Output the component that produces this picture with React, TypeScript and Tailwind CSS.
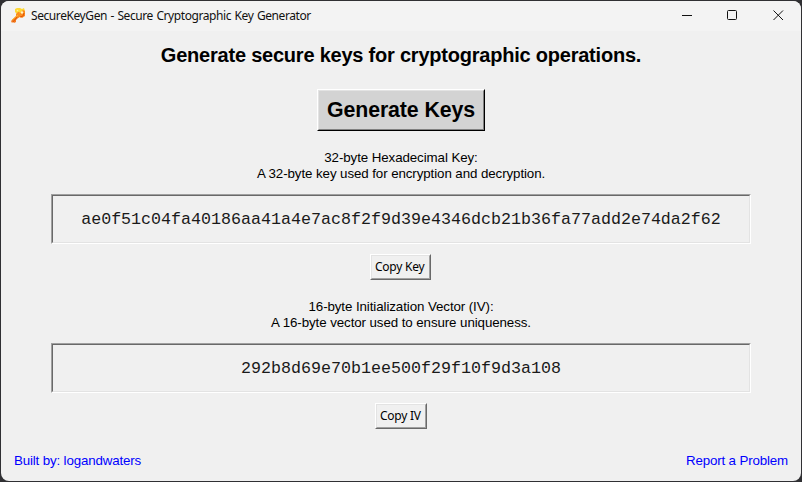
import type { ReactNode } from "react";

function KeyIcon() {
  return (
    <svg width="16" height="16" viewBox="0 0 16 16" className="shrink-0">
      <path d="M5 1l2-1h3l2 1 2-1 1 3-3 3H7L5 4z" fill="#fdd835" />
      <path d="M7 7l2 2-3 3v2l-2 1-1-1-1 1-1-2z" fill="#f47c20" />
      <path d="M6 6l2-2 3 0 2-2 2 1v5l-3 2-2-1-2 1-2-2z" fill="#fb8c1e" />
      <path d="M2 12l6-5M9 5l3-1" stroke="#ffb52e" strokeWidth="1" fill="none" />
      <path d="M3 14l4-5M10 9l3-1 1-3" stroke="#e25608" strokeWidth="1" fill="none" />
      <circle cx="12" cy="4.5" r="1.2" fill="#fff3c4" />
      <circle cx="7.5" cy="2.5" r="0.8" fill="#fff59a" />
    </svg>
  );
}

function TitleBar() {
  return (
    <div className="flex h-[30px] shrink-0 items-center bg-[#f3f3f3] pl-[9px]">
      <KeyIcon />
      <span className="ml-[5px] whitespace-nowrap font-['Noto_Sans',sans-serif] text-[12px] leading-[16px] tracking-[-0.42px] [word-spacing:0.8px] text-[#111]">
        SecureKeyGen - Secure Cryptographic Key Generator
      </span>
      <svg className="mr-[16px] mb-[2px] ml-auto" width="104" height="12" viewBox="0 0 104 12" fill="none" stroke="#111">
        <path d="M1 6.5h10" />
        <rect x="46.5" y="1.5" width="9" height="9" rx="1" />
        <path d="M92.5 1.5l9.5 9.5M102 1.5l-9.5 9.5" />
      </svg>
    </div>
  );
}

function Description({ children }: { children: ReactNode }) {
  return (
    <div className="h-8 whitespace-nowrap text-center text-[13.33px] leading-4 tracking-[-0.09px]">{children}</div>
  );
}

function ValueBox({ children }: { children: string }) {
  return (
    <div className="h-[50px] w-[700px] border border-t-[#a0a0a0] border-l-[#a0a0a0] border-r-white border-b-white">
      <div className="flex h-full items-center justify-center border border-t-[#696969] border-l-[#696969] border-r-[#e3e3e3] border-b-[#e3e3e3] pt-[2px] font-['Liberation_Mono',monospace] text-[16.667px] leading-5 text-[#1a1a1a]">
        {children}
      </div>
    </div>
  );
}

function CopyButton({ children }: { children: string }) {
  return (
    <button className="h-[26px] border border-t-white border-l-white border-r-[#696969] border-b-[#696969]">
      <span className="flex h-full items-center whitespace-nowrap border border-t-[#e3e3e3] border-l-[#e3e3e3] border-r-[#a0a0a0] border-b-[#a0a0a0] px-[3px] font-['Noto_Sans',sans-serif] text-[12px] leading-4 tracking-[-0.25px]">
        {children}
      </span>
    </button>
  );
}

export default function App() {
  return (
    <div className="h-[482px] w-[802px] overflow-hidden bg-[#303033] p-px font-['Liberation_Sans',Arial,sans-serif] text-black">
      <main className="flex h-[480px] w-[800px] flex-col overflow-hidden rounded-[8px] bg-[#f0f0f0]">
        <TitleBar />
        <section className="flex flex-col items-center pt-[12px]">
          <h1 className="h-6 whitespace-nowrap text-[20px] font-bold leading-6 tracking-[-0.22px]">
            Generate secure keys for cryptographic operations.
          </h1>
          <button className="mt-[22px] h-[42px] w-[168px] border border-t-white border-l-white border-r-black border-b-black">
            <span className="flex h-full items-center justify-center whitespace-nowrap border border-t-[#e3e3e3] border-l-[#e3e3e3] border-r-[#808080] border-b-[#808080] bg-[#d3d3d3] pt-[2px] text-[21.33px] font-bold tracking-[-0.1px]">
              Generate Keys
            </span>
          </button>
          <div className="mt-[19px]">
            <Description>
              <p>32-byte Hexadecimal Key:</p>
              <p>A 32-byte key used for encryption and decryption.</p>
            </Description>
          </div>
          <div className="mt-[12px]">
            <ValueBox>ae0f51c04fa40186aa41a4e7ac8f2f9d39e4346dcb21b36fa77add2e74da2f62</ValueBox>
          </div>
          <div className="mt-[10px] mr-px flex h-[26px] w-[61px] flex-col">
            <CopyButton>Copy Key</CopyButton>
          </div>
          <div className="mt-[19px]">
            <Description>
              <p>16-byte Initialization Vector (IV):</p>
              <p>A 16-byte vector used to ensure uniqueness.</p>
            </Description>
          </div>
          <div className="mt-[12px]">
            <ValueBox>292b8d69e70b1ee500f29f10f9d3a108</ValueBox>
          </div>
          <div className="mt-[10px] flex h-[26px] w-[52px] flex-col">
            <CopyButton>Copy IV</CopyButton>
          </div>
        </section>
        <footer className="mt-auto flex h-[28px] justify-between px-[13px] text-[13.33px] leading-4 tracking-[-0.15px] text-[#0000ff]">
          <a>Built by: logandwaters</a>
          <a>Report a Problem</a>
        </footer>
      </main>
    </div>
  );
}
